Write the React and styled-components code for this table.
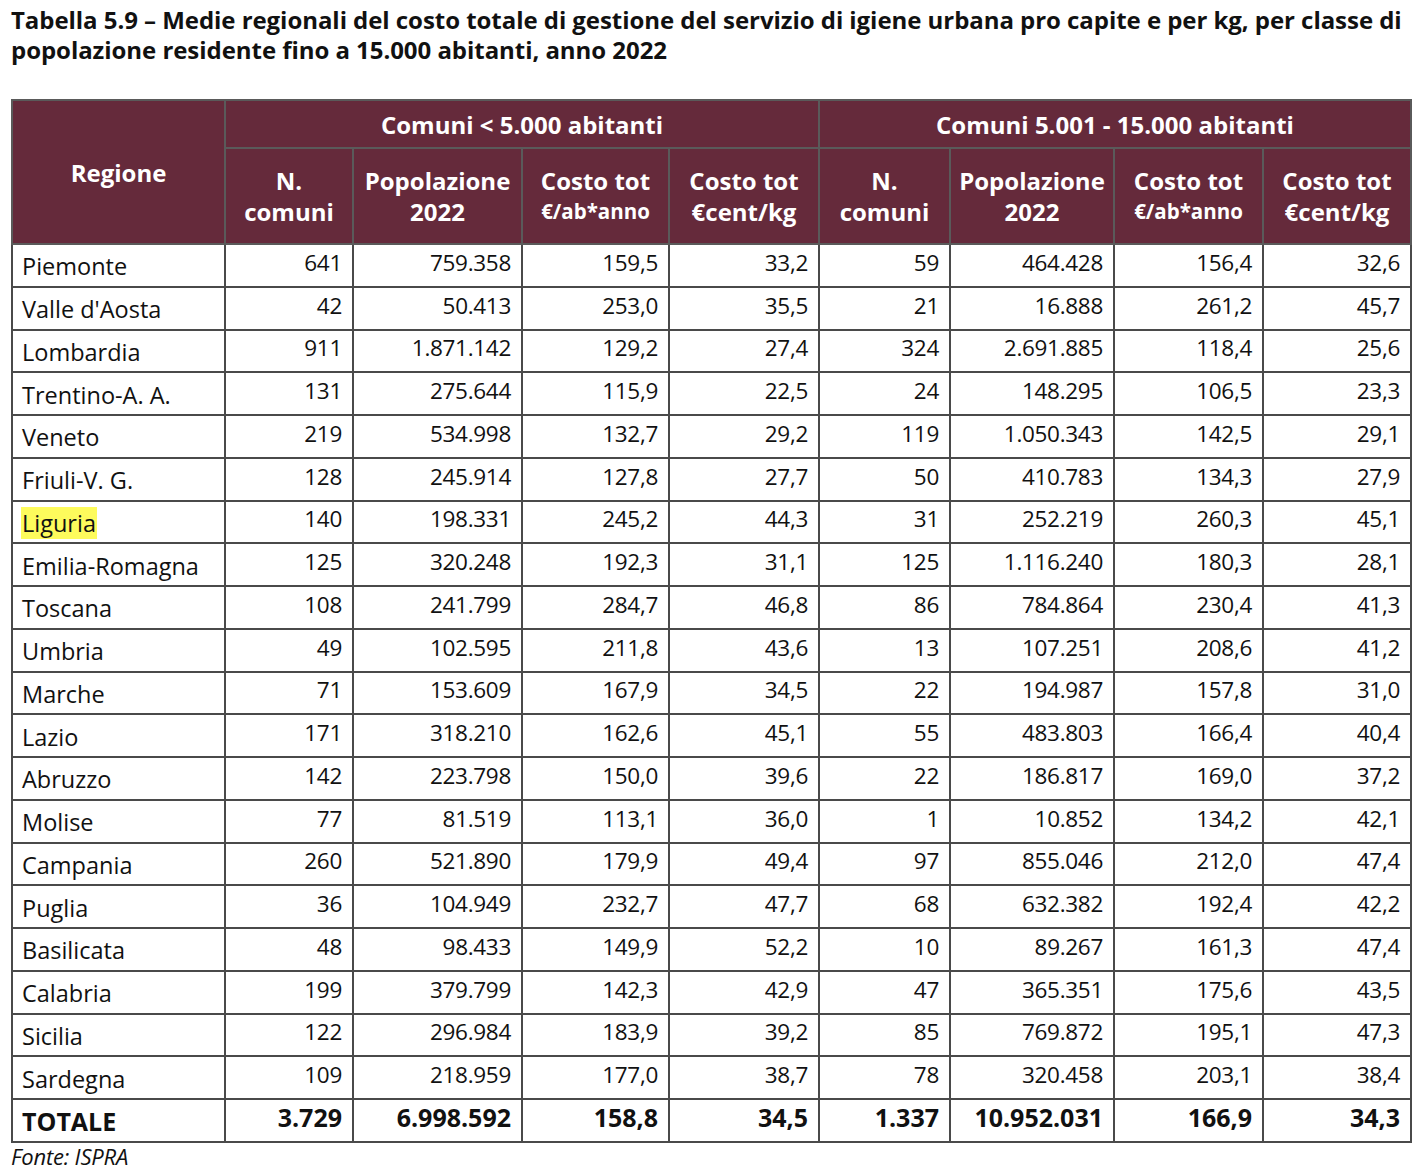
import React from "react";
import styled, { createGlobalStyle } from "styled-components";

const GlobalStyle = createGlobalStyle`
  html, body {
    margin: 0;
    padding: 0;
    background: #ffffff;
  }
  body {
    font-family: "Open Sans", "Liberation Sans", sans-serif;
    color: #111;
  }
`;

const Page = styled.div`
  width: 1422px;
  padding: 5px 0 0 11px;
  box-sizing: border-box;
`;

const Title = styled.h1`
  margin: 0;
  font-size: 24px;
  line-height: 30px;
  font-weight: 700;
  letter-spacing: -0.05px;
  color: #111;
`;

const Table = styled.table`
  margin-top: 34px;
  border-collapse: collapse;
  table-layout: fixed;
  width: 1399px;
  border: 2px solid #4a4a4a;
`;

const HeadCell = styled.th`
  background: #652a3b;
  color: #fff;
  font-weight: 700;
  font-size: 24px;
  letter-spacing: 0;
  text-align: center;
  vertical-align: middle;
  border: 2px solid #5a5a5a;
  height: ${(p) => p.$h}px;
  padding: 0 2px;
  line-height: 31px;
  white-space: nowrap;
`;

const Small = styled.span`
  display: block;
  font-size: 20.5px;
`;

const Row = styled.tr`
  height: 42.75px;
`;

const Cell = styled.td`
  border: 2px solid #4a4a4a;
  font-size: ${(p) => (p.$bold ? 25 : p.$left ? 23.5 : 22.5)}px;
  letter-spacing: ${(p) => (p.$bold || p.$left ? 0 : -0.3)}px;
  font-weight: ${(p) => (p.$bold ? 700 : 400)};
  text-align: ${(p) => (p.$left ? "left" : "right")};
  padding: ${(p) => (p.$left ? "2px 10px 0 9px" : "0 10px 6px 4px")};
  vertical-align: middle;
  white-space: nowrap;
  color: #111;
`;

const Mark = styled.span`
  background: #fdfb5c;
  padding: 0 1px;
  margin-left: -1px;
`;

const Source = styled.div`
  margin-top: -2px;
  font-size: 22px;
  font-style: italic;
  letter-spacing: -0.2px;
  color: #111;
`;

const widths = [213, 128, 169, 147, 150, 131, 164, 149, 148];

const rows = [
  ["Piemonte", "641", "759.358", "159,5", "33,2", "59", "464.428", "156,4", "32,6"],
  ["Valle d'Aosta", "42", "50.413", "253,0", "35,5", "21", "16.888", "261,2", "45,7"],
  ["Lombardia", "911", "1.871.142", "129,2", "27,4", "324", "2.691.885", "118,4", "25,6"],
  ["Trentino-A. A.", "131", "275.644", "115,9", "22,5", "24", "148.295", "106,5", "23,3"],
  ["Veneto", "219", "534.998", "132,7", "29,2", "119", "1.050.343", "142,5", "29,1"],
  ["Friuli-V. G.", "128", "245.914", "127,8", "27,7", "50", "410.783", "134,3", "27,9"],
  ["Liguria", "140", "198.331", "245,2", "44,3", "31", "252.219", "260,3", "45,1"],
  ["Emilia-Romagna", "125", "320.248", "192,3", "31,1", "125", "1.116.240", "180,3", "28,1"],
  ["Toscana", "108", "241.799", "284,7", "46,8", "86", "784.864", "230,4", "41,3"],
  ["Umbria", "49", "102.595", "211,8", "43,6", "13", "107.251", "208,6", "41,2"],
  ["Marche", "71", "153.609", "167,9", "34,5", "22", "194.987", "157,8", "31,0"],
  ["Lazio", "171", "318.210", "162,6", "45,1", "55", "483.803", "166,4", "40,4"],
  ["Abruzzo", "142", "223.798", "150,0", "39,6", "22", "186.817", "169,0", "37,2"],
  ["Molise", "77", "81.519", "113,1", "36,0", "1", "10.852", "134,2", "42,1"],
  ["Campania", "260", "521.890", "179,9", "49,4", "97", "855.046", "212,0", "47,4"],
  ["Puglia", "36", "104.949", "232,7", "47,7", "68", "632.382", "192,4", "42,2"],
  ["Basilicata", "48", "98.433", "149,9", "52,2", "10", "89.267", "161,3", "47,4"],
  ["Calabria", "199", "379.799", "142,3", "42,9", "47", "365.351", "175,6", "43,5"],
  ["Sicilia", "122", "296.984", "183,9", "39,2", "85", "769.872", "195,1", "47,3"],
  ["Sardegna", "109", "218.959", "177,0", "38,7", "78", "320.458", "203,1", "38,4"],
];

const total = ["TOTALE", "3.729", "6.998.592", "158,8", "34,5", "1.337", "10.952.031", "166,9", "34,3"];

const SubHeads = () => (
  <>
    <HeadCell $h={94}>N.<br />comuni</HeadCell>
    <HeadCell $h={94}>Popolazione<br />2022</HeadCell>
    <HeadCell $h={94}>Costo tot<Small>€/ab*anno</Small></HeadCell>
    <HeadCell $h={94}>Costo tot<br />€cent/kg</HeadCell>
  </>
);

const DataRow = ({ values, bold }) => (
  <Row>
    {values.map((v, i) => (
      <Cell key={i} $left={i === 0} $bold={bold}>
        {v === "Liguria" ? <Mark>{v}</Mark> : v}
      </Cell>
    ))}
  </Row>
);

export default function App() {
  return (
    <Page>
      <GlobalStyle />
      <Title>
        Tabella 5.9 – Medie regionali del costo totale di gestione del servizio di igiene urbana pro capite e per kg, per classe di
        <br />
        popolazione residente fino a 15.000 abitanti, anno 2022
      </Title>
      <Table>
        <colgroup>
          {widths.map((w, i) => (
            <col key={i} style={{ width: w }} />
          ))}
        </colgroup>
        <thead>
          <tr>
            <HeadCell rowSpan={2} $h={46}>Regione</HeadCell>
            <HeadCell colSpan={4} $h={46}>Comuni &lt; 5.000 abitanti</HeadCell>
            <HeadCell colSpan={4} $h={46}>Comuni 5.001 - 15.000 abitanti</HeadCell>
          </tr>
          <tr>
            <SubHeads />
            <SubHeads />
          </tr>
        </thead>
        <tbody>
          {rows.map((r) => (
            <DataRow key={r[0]} values={r} />
          ))}
          <DataRow values={total} bold />
        </tbody>
      </Table>
      <Source>Fonte: ISPRA</Source>
    </Page>
  );
}
